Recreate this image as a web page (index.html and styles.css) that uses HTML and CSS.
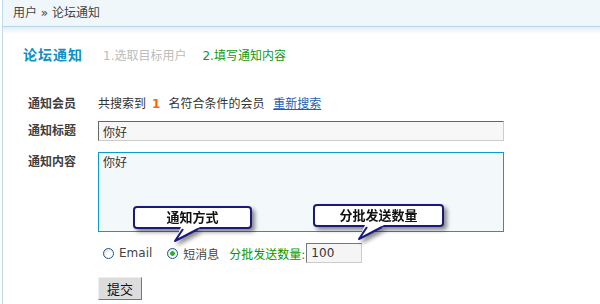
FILE: index.html
```html
<!DOCTYPE html>
<html lang="zh-CN">
<head>
    <meta charset="UTF-8">
    <title>论坛通知</title>
    <link rel="stylesheet" href="styles.css">
</head>
<body>
    <div class="wrap">
        <div class="crumb">用户 &raquo; 论坛通知</div>
        <div class="crumb-fade"></div>

        <div class="main">
            <div class="title-row">
                <h2 class="title">论坛通知</h2>
                <span class="step">1.选取目标用户</span>
                <span class="step step-on">2.填写通知内容</span>
            </div>

            <div class="form">
                <div class="row row-members">
                    <label class="label">通知会员</label>
                    <div class="value">
                        共搜索到<b class="count">1</b>名符合条件的会员
                        <a class="link" href="#">重新搜索</a>
                    </div>
                </div>

                <div class="row row-subject">
                    <label class="label">通知标题</label>
                    <div class="value">
                        <input class="text-input" type="text" value="你好">
                    </div>
                </div>

                <div class="row row-content">
                    <label class="label">通知内容</label>
                    <div class="value">
                        <textarea class="text-area">你好</textarea>
                    </div>
                </div>

                <div class="row row-options">
                    <div class="label"></div>
                    <div class="value options">
                        <label class="opt"><input class="radio" type="radio" name="way">Email</label>
                        <label class="opt"><input class="radio" type="radio" name="way" checked>短消息</label>
                        <span class="batch-label">分批发送数量:</span>
                        <input class="batch-input" type="text" value="100">
                    </div>
                </div>

                <div class="row row-submit">
                    <div class="label"></div>
                    <div class="value">
                        <button class="btn" type="button">提交</button>
                    </div>
                </div>
            </div>
        </div>

        <!-- tips over the form -->
        <div class="callout callout-way">
            通知方式
            <svg class="tail" width="28" height="16" viewBox="0 0 28 16">
                <path d="M8 0 L27 0 L2 14 Z" fill="#fff"/>
                <path d="M10 2 L2 14 L25 2" fill="none" stroke="#1b1a7c" stroke-width="2" stroke-linejoin="round"/>
            </svg>
        </div>
        <div class="callout callout-batch">
            分批发送数量
            <svg class="tail" width="28" height="16" viewBox="0 0 28 16">
                <path d="M8 0 L27 0 L2 14 Z" fill="#fff"/>
                <path d="M10 2 L2 14 L25 2" fill="none" stroke="#1b1a7c" stroke-width="2" stroke-linejoin="round"/>
            </svg>
        </div>
    </div>
</body>
</html>
```

FILE: styles.css
```css
* {
    margin: 0;
    padding: 0;
    box-sizing: border-box;
}

body {
    font-family: "DejaVu Sans", "Noto Sans CJK SC", sans-serif;
    font-size: 12px;
    color: #333;
    background: #fff;
}

.wrap {
    position: relative;
    margin-left: 2px;
    min-height: 304px;
    border-left: 1px solid #c2dbea;
}

.crumb {
    height: 27px;
    line-height: 26px;
    padding-left: 10px;
    background: #f0f7fb;
    border-bottom: 1px solid #b7d5e3;
    color: #444;
}

.crumb-fade {
    height: 7px;
    background: linear-gradient(#e2eef5, #fff);
}

.main {
    padding-left: 20px;
}

.title-row {
    display: flex;
    align-items: center;
    height: 20px;
    margin-top: 10px;
}

.title {
    font-size: 14px;
    font-weight: bold;
    letter-spacing: 1px;
    color: #118fc4;
}

.step {
    margin-left: 20px;
    color: #bbb;
}

.step-on {
    margin-left: 16px;
    color: #119911;
}

.form {
    margin-top: 28px;
    padding-left: 5px;
}

.row {
    display: flex;
}

.label {
    width: 70px;
    flex-shrink: 0;
    font-weight: bold;
    color: #404040;
    line-height: 20px;
}

.row-members {
    line-height: 24px;
}

.row-members .label {
    line-height: 24px;
}

.count {
    margin: 0 8px 0 6px;
    color: #f60;
}

.link {
    margin-left: 5px;
    color: #1d5fae;
}

.row-subject {
    margin-top: 5px;
}

.text-input {
    width: 406px;
    height: 20px;
    padding: 0 4px;
    border: 1px solid;
    border-color: #666 #ccc #ccc #666;
    background: #f7f7f7;
    font: inherit;
    color: #333;
}

.row-content {
    margin-top: 11px;
}

.text-area {
    display: block;
    width: 406px;
    height: 80px;
    padding: 2px 4px;
    border: 1px solid #0a9ccc;
    background: #f3f8fb;
    font: inherit;
    line-height: 16px;
    color: #333;
    resize: none;
}

.row-options {
    margin-top: 11px;
}

.options {
    display: flex;
    align-items: center;
    height: 20px;
}

.opt {
    display: flex;
    align-items: center;
    margin-right: 15px;
    color: #444;
}

.opt:first-child {
    margin-left: 5px;
}

.opt + .opt {
    margin-right: 10px;
}

.radio {
    appearance: none;
    width: 11px;
    height: 11px;
    margin-right: 5px;
    border: 1px solid #1f5685;
    border-radius: 50%;
    background: radial-gradient(circle at 65% 70%, #fff 0, #fff 30%, #d6d6d6 100%);
}

.radio:checked {
    background:
        radial-gradient(circle, #27b327 0, #27b327 2px, transparent 2.6px),
        radial-gradient(circle at 65% 70%, #fff 0, #fff 30%, #d6d6d6 100%);
}

.batch-label {
    color: #090;
}

.batch-input {
    width: 56px;
    height: 20px;
    margin-left: 1px;
    padding: 0 4px;
    border: 1px solid;
    border-color: #777 #ccc #ccc #777;
    background: #f5f5f5;
    font: inherit;
    color: #333;
}

.row-submit {
    margin-top: 14px;
}

.btn {
    height: 23px;
    padding: 0 8px;
    border: 1px solid;
    border-color: #eee #777 #777 #eee;
    background: #dcdcdc;
    font: inherit;
    font-size: 13px;
    color: #111;
}

.callout {
    position: absolute;
    height: 23px;
    line-height: 19px;
    border: 2px solid #1b1a7c;
    border-radius: 4px;
    background: #fff;
    text-align: center;
    font-size: 13px;
    font-weight: bold;
    color: #111;
    filter: drop-shadow(3px 3px 2px rgba(0, 0, 0, 0.45));
}

.callout .tail {
    position: absolute;
    top: 19px;
    display: block;
}

.callout-way {
    left: 130px;
    top: 206px;
    width: 119px;
}

.callout-way .tail {
    left: 38px;
}

.callout-batch {
    left: 310px;
    top: 204px;
    width: 131px;
}

.callout-batch .tail {
    left: 42px;
}
```
